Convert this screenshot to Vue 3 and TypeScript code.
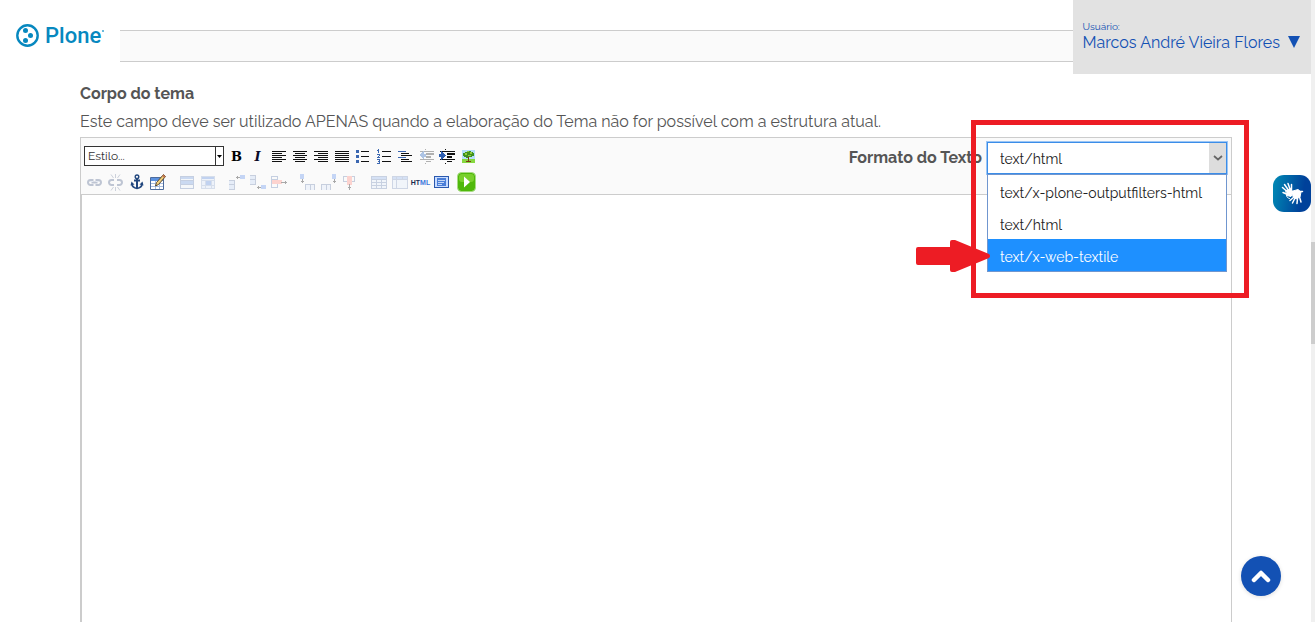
<script setup lang="ts">
import { ref } from 'vue'

interface Shape {
  d: string
  fill?: string
  stroke?: string
  width?: number
}
interface Tool {
  label: string
  shapes?: Shape[]
  text?: string
  kind?: string
  faded?: boolean
  smooth?: boolean
}

const box = (x: number, y: number, w: number, h: number): string => `M${x} ${y}h${w}v${h}h${-w}z`
const boxes = (list: number[][]): string => list.map(([x, y, w, h]) => box(x, y, w, h)).join('')

const INK = '#111111'
const BLUE = '#3a66b0'
const PALE = '#c3d6f5'

const lines = (x: number, short: number): string =>
  boxes([0, 1, 2, 3, 4, 5].map((i) => (i % 2 ? [x, 5 + i * 2, short, 1] : [4, 5 + i * 2, 14, 1])))

const grid = (x: number, y: number, w: number, h: number): Shape[] => [
  { d: box(x, y, w, h), fill: '#e6effc' },
  { d: box(x, y, w, 3), fill: '#9fbdf0' },
  {
    d: boxes([[x, y, w, 1], [x, y + h - 1, w, 1], [x, y, 1, h], [x + w - 1, y, 1, h], [x, y + 3, w, 1], [x, y + 6, w, 1], [x, y + 9, w, 1], [x + 5, y + 3, 1, h - 3], [x + 10, y + 3, 1, h - 3]]),
    fill: '#7f96bd',
  },
]

const cellPair = (x: number, y: number): Shape[] => [
  { d: box(x, y, 5, 9), fill: '#c9daf7' },
  { d: boxes([[x, y, 5, 1], [x, y + 4, 5, 1], [x, y + 9, 5, 1], [x + 5, y, 1, 10]]), fill: '#7d90b5' },
]

const rowOne: Tool[] = [
  { label: 'Negrito', text: 'B', kind: 'bold' },
  { label: 'Itálico', text: 'I', kind: 'italic' },
  { label: 'Alinhar à esquerda', shapes: [{ d: lines(4, 10), fill: INK }] },
  { label: 'Centralizar', shapes: [{ d: lines(6, 10), fill: INK }] },
  { label: 'Alinhar à direita', shapes: [{ d: lines(8, 10), fill: INK }] },
  { label: 'Justificar', shapes: [{ d: lines(4, 14), fill: INK }] },
  {
    label: 'Lista com marcadores',
    shapes: [
      { d: boxes([[4, 4, 3, 3], [4, 9, 3, 3], [4, 14, 3, 3]]), fill: BLUE },
      { d: boxes([[9, 5, 8, 1], [9, 10, 8, 1], [9, 15, 8, 1]]), fill: INK },
    ],
  },
  {
    label: 'Lista numerada',
    shapes: [
      { d: boxes([[5, 3, 1, 4], [4, 4, 1, 1], [4, 8, 3, 1], [6, 9, 1, 1], [5, 10, 1, 1], [4, 11, 3, 1], [4, 13, 3, 1], [6, 13, 1, 4], [5, 15, 1, 1], [4, 17, 3, 1]]), fill: BLUE },
      { d: boxes([[9, 5, 9, 1], [9, 10, 9, 1], [9, 15, 9, 1]]), fill: INK },
    ],
  },
  {
    label: 'Lista de definições',
    shapes: [
      { d: boxes([[4, 5, 8, 1], [4, 11, 8, 1]]), fill: BLUE },
      { d: boxes([[7, 7, 8, 1], [7, 9, 11, 1], [7, 13, 8, 1], [7, 15, 11, 1]]), fill: INK },
    ],
  },
  {
    label: 'Diminuir recuo',
    faded: true,
    shapes: [
      { d: boxes([[5, 5, 14, 1], [11, 7, 8, 2], [11, 10, 5, 2], [5, 13, 14, 1], [11, 15, 5, 1], [10, 3, 1, 1], [10, 17, 1, 1]]), fill: '#444444' },
      { d: 'M4 9l5-4v3h2v3h-2v3z', fill: '#3f75c5' },
    ],
  },
  {
    label: 'Aumentar recuo',
    shapes: [
      { d: boxes([[4, 5, 15, 1], [11, 7, 8, 2], [11, 10, 5, 2], [4, 13, 15, 1], [11, 15, 5, 1], [9, 3, 1, 1], [9, 17, 1, 1]]), fill: INK },
      { d: 'M10 9l-5-4v3h-2v3h2v3z', fill: '#2f5fb0' },
    ],
  },
  {
    label: 'Inserir imagem',
    shapes: [
      { d: box(5, 4, 13, 13), fill: '#b5defa' },
      { d: box(5, 13, 13, 4), fill: '#86d840' },
      { d: 'M8 6h2v-1h4v1h2v1h1v3h-2v1h-3v1h-3v-1h-2v-1h-1v-3h2z', fill: '#3f9120' },
      { d: boxes([[8, 7, 2, 2], [13, 6, 2, 2], [11, 9, 3, 1], [10, 5, 2, 1]]), fill: '#93cb3a' },
      { d: 'M11 11h1v4h2v1h-5v-1h2z', fill: '#7b3c12' },
    ],
  },
]

const rowTwo: Tool[][] = [
  [
    {
      label: 'Inserir link',
      faded: true,
      smooth: true,
      shapes: [
        { d: 'M9.5 13h-3a2.5 2.5 0 0 1 0-5h3M11.5 8h3a2.5 2.5 0 0 1 0 5h-3M7.5 10.5h6', stroke: '#66789b', width: 2 },
        { d: 'M6 9.5h3M12 9.5h3', stroke: '#c8d4ea', width: 1 },
      ],
    },
    {
      label: 'Remover link',
      faded: true,
      smooth: true,
      shapes: [
        { d: 'M9 13H6.5a2.5 2.5 0 0 1 0-5H9M12 8h2.5a2.5 2.5 0 0 1 0 5H12', stroke: '#66789b', width: 2 },
        { d: 'M10.5 2v4M6 2.5l2.5 3.5M15 2.5l-2.5 3.5M10.5 19v-4M6 18.5l2.5-3.5M15 18.5l-2.5-3.5', stroke: '#8996ae', width: 1 },
      ],
    },
    {
      label: 'Âncora',
      smooth: true,
      shapes: [
        { d: 'M11 7v9M8 8.5h6', stroke: '#22477e', width: 2 },
        { d: 'M11 3a1.5 1.5 0 1 1 0 3.6a1.5 1.5 0 1 1 0-3.6', stroke: '#22477e', width: 1.4 },
        { d: 'M5.8 11.5c.3 3 2.2 4.6 5.2 4.8c3-.2 4.9-1.8 5.2-4.8', stroke: '#22477e', width: 1.8 },
        { d: 'M4.5 13.5l1-4 3 3zM17.5 13.5l-1-4-3 3z', fill: '#22477e' },
      ],
    },
    {
      label: 'Editar tabela',
      smooth: true,
      shapes: [
        { d: box(3.5, 5.5, 13, 12), fill: '#ffffff', stroke: '#4d6c9d', width: 1 },
        { d: box(4, 6, 12, 3), fill: '#5b91df' },
        { d: 'M4 11.5h12M4 14.5h12M8.5 9v8M12.5 9v8', stroke: '#a8bddd', width: 1 },
        { d: 'M16.5 2.5l2 2-7 8-3 1.5 1-3.5z', fill: '#f0cf7a', stroke: '#5d4a30', width: 1 },
        { d: 'M16.5 2.5l2 2-1.5 1.5-2-2z', fill: '#c57951' },
      ],
    },
  ],
  [
    {
      label: 'Propriedades da linha',
      faded: true,
      shapes: [
        { d: box(4, 4, 14, 12), fill: '#edf3fc' },
        { d: boxes([[4, 4, 14, 3], [5, 9, 12, 3]]), fill: '#84a9e6' },
        { d: boxes([[4, 4, 14, 1], [4, 8, 14, 1], [4, 12, 14, 1], [4, 16, 14, 1], [4, 4, 1, 12], [17, 4, 1, 12]]), fill: '#7891bc' },
      ],
    },
    {
      label: 'Propriedades da célula',
      faded: true,
      shapes: [
        { d: box(4, 4, 14, 12), fill: '#dbe7fa' },
        { d: boxes([[4, 4, 14, 3], [9, 9, 5, 4]]), fill: '#6d98e2' },
        { d: boxes([[4, 4, 14, 1], [4, 8, 14, 1], [4, 13, 14, 1], [4, 16, 14, 1], [4, 4, 1, 12], [8, 8, 1, 8], [14, 8, 1, 8], [17, 4, 1, 12]]), fill: '#a3b6d6' },
      ],
    },
  ],
  [
    {
      label: 'Inserir linha antes',
      faded: true,
      shapes: [
        ...cellPair(3, 8),
        { d: box(14, 3, 5, 4), fill: '#74a0ee' },
        { d: boxes([[10, 5, 4, 1], [11, 4, 1, 3]]), fill: '#333333' },
      ],
    },
    {
      label: 'Inserir linha depois',
      faded: true,
      shapes: [
        ...cellPair(3, 3),
        { d: box(14, 13, 5, 4), fill: '#74a0ee' },
        { d: boxes([[10, 15, 4, 1], [11, 14, 1, 3]]), fill: '#333333' },
      ],
    },
    {
      label: 'Excluir linha',
      faded: true,
      shapes: [
        { d: boxes([[3, 4, 7, 1], [3, 7, 7, 1], [3, 4, 1, 12], [9, 4, 1, 12], [3, 15, 7, 1]]), fill: '#7891bc' },
        { d: box(4, 8, 10, 4), fill: '#ff9a90' },
        { d: boxes([[13, 10, 6, 1], [17, 9, 1, 3]]), fill: '#333333' },
      ],
    },
  ],
  [
    {
      label: 'Inserir coluna antes',
      faded: true,
      shapes: [
        { d: box(3, 2, 4, 5), fill: '#74a0ee' },
        { d: boxes([[5, 7, 1, 4], [4, 9, 3, 1]]), fill: '#333333' },
        { d: box(8, 12, 9, 6), fill: '#dfe9fa' },
        { d: boxes([[8, 12, 10, 1], [8, 12, 1, 6], [13, 12, 1, 6], [17, 12, 1, 6]]), fill: '#7d90b5' },
      ],
    },
    {
      label: 'Inserir coluna depois',
      faded: true,
      shapes: [
        { d: box(14, 2, 4, 5), fill: '#74a0ee' },
        { d: boxes([[16, 7, 1, 4], [15, 9, 3, 1]]), fill: '#333333' },
        { d: box(3, 12, 9, 6), fill: '#dfe9fa' },
        { d: boxes([[3, 12, 10, 1], [3, 12, 1, 6], [8, 12, 1, 6], [12, 12, 1, 6]]), fill: '#7d90b5' },
      ],
    },
    {
      label: 'Excluir coluna',
      faded: true,
      shapes: [
        { d: boxes([[4, 4, 12, 1], [4, 4, 1, 6], [15, 4, 1, 6], [4, 9, 12, 1]]), fill: '#7d90b5' },
        { d: box(8, 4, 5, 9), fill: '#ff9a90' },
        { d: boxes([[10, 12, 1, 6], [9, 15, 3, 1]]), fill: '#333333' },
      ],
    },
  ],
  [
    { label: 'Mesclar células', faded: true, shapes: grid(3, 4, 16, 13) },
    {
      label: 'Dividir células',
      faded: true,
      shapes: [
        { d: box(3, 4, 16, 13), fill: '#e6effc' },
        { d: box(3, 4, 16, 3), fill: '#9fbdf0' },
        { d: boxes([[3, 4, 16, 1], [3, 16, 16, 1], [3, 4, 1, 13], [18, 4, 1, 13], [3, 7, 16, 1], [7, 4, 1, 12], [13, 4, 1, 3]]), fill: '#8da3c8' },
      ],
    },
    { label: 'Editar HTML', text: 'HTML', kind: 'html' },
    {
      label: 'Tela cheia',
      shapes: [
        { d: box(3, 4, 15, 12), fill: '#2b59ae' },
        { d: box(4, 5, 13, 10), fill: '#c8dcff' },
        { d: box(6, 6, 9, 8), fill: '#4a7ed8' },
        { d: boxes([[7, 8, 7, 1], [7, 10, 6, 1], [7, 12, 4, 1]]), fill: PALE },
      ],
    },
  ],
]

const formats: string[] = ['text/x-plone-outputfilters-html', 'text/html', 'text/x-web-textile']
const format = ref('text/html')
const highlighted = ref('text/x-web-textile')
const content = ref('')
</script>

<template>
  <div class="page">
    <header class="top">
      <a class="logo" href="#" aria-label="Plone">
        <svg width="24" height="24" viewBox="0 0 24 24" aria-hidden="true">
          <circle cx="11.5" cy="11.5" r="10.2" fill="none" stroke="#0788bf" stroke-width="2.4" />
          <g fill="#0788bf">
            <circle cx="9.5" cy="6.5" r="2.5" />
            <circle cx="14.5" cy="11.5" r="2.5" />
            <circle cx="9.5" cy="16.5" r="2.5" />
          </g>
        </svg>
        <span>Plone</span><i class="mark"></i>
      </a>
      <div class="strip"></div>
      <button class="user" type="button">
        <small>Usuário:</small>
        <span class="name">Marcos André Vieira Flores
          <svg width="12" height="12" viewBox="0 0 12 12" aria-hidden="true"><path d="M0 0h12L6 12z" fill="#1351b4" /></svg>
        </span>
      </button>
    </header>

    <main class="field">
      <label class="title" for="body-text">Corpo do tema</label>
      <p class="help">Este campo deve ser utilizado APENAS quando a elaboração do Tema não for possível com a estrutura atual.</p>

      <div class="editor">
        <div class="toolbar">
          <div class="tools">
            <div class="row">
              <span class="style-box">
                <select aria-label="Estilo"><option>Estilo...</option></select>
                <svg width="5" height="3" viewBox="0 0 5 3" aria-hidden="true"><path d="M0 0h5L2.5 3z" /></svg>
              </span>
              <button v-for="tool in rowOne" :key="tool.label" type="button" class="tool" :class="[tool.kind, { faded: tool.faded }]" :aria-label="tool.label">
                <template v-if="tool.text">{{ tool.text }}</template>
                <svg v-else width="21" height="20" viewBox="0 0 21 20" aria-hidden="true" class="crisp">
                  <path v-for="(s, i) in tool.shapes" :key="i" :d="s.d" :fill="s.fill ?? 'none'" />
                </svg>
              </button>
            </div>
            <div class="row groups">
              <div v-for="(group, g) in rowTwo" :key="g" class="group">
                <button v-for="tool in group" :key="tool.label" type="button" class="tool" :class="[tool.kind, { faded: tool.faded }]" :aria-label="tool.label">
                  <template v-if="tool.text">HT<b>ML</b></template>
                  <svg v-else width="21" height="20" viewBox="0 0 21 20" aria-hidden="true" :class="{ crisp: !tool.smooth }">
                    <path v-for="(s, i) in tool.shapes" :key="i" :d="s.d" :fill="s.fill ?? 'none'" :stroke="s.stroke" :stroke-width="s.width" />
                  </svg>
                </button>
                <button v-if="g === rowTwo.length - 1" type="button" class="tool run" aria-label="Inserir mídia">
                  <svg width="20" height="20" viewBox="0 0 20 20" aria-hidden="true">
                    <rect x="0.5" y="0.5" width="18" height="19" rx="4" fill="#4fb80a" stroke="#a8dc85" />
                    <rect x="2" y="2" width="15" height="8" rx="3" fill="#79d02d" />
                    <path d="M7 4.5l6 5.5L7 15.5z" fill="#ffffff" />
                  </svg>
                </button>
              </div>
            </div>
          </div>

          <div class="format">
            <label for="format">Formato do Texto</label>
            <div class="combo">
              <select id="format" v-model="format">
                <option v-for="f in formats" :key="f" :value="f">{{ f }}</option>
              </select>
              <span class="chevron">
                <svg width="10" height="6" viewBox="0 0 10 6" aria-hidden="true"><path d="M1 1l4 3.5L9 1" fill="none" stroke="#666666" stroke-width="1.7" /></svg>
              </span>
              <ul class="menu" role="listbox" aria-label="Formato do Texto">
                <li v-for="f in formats" :key="f" role="option" :aria-selected="f === highlighted" :class="{ active: f === highlighted }" @mouseenter="highlighted = f" @click="format = f">{{ f }}</li>
              </ul>
            </div>
          </div>
        </div>
        <textarea id="body-text" v-model="content"></textarea>
        <div class="callout">
          <svg class="arrow" width="75" height="32" viewBox="0 0 75 32" aria-hidden="true">
            <path d="M2 7H34V2Q34 0 36 0H39L73 14Q75 16 73 18L39 32H36Q34 32 34 30V25H2Q0 25 0 23V9Q0 7 2 7z" fill="#ed1c24" />
          </svg>
        </div>
      </div>
    </main>

    <button class="libras" type="button" aria-label="Acessível em Libras">
      <svg width="38" height="37" viewBox="0 0 38 37" aria-hidden="true" fill="none" stroke="#ffffff" stroke-linecap="round" stroke-linejoin="round">
        <path d="M13.5 16L9.5 12.5M15 14.5L11.5 9.5M17 14L15 8.5M18.5 14.5L18.5 9.5M13.5 19L10 17.5" stroke-width="1.5" />
        <path d="M13 15.5l5-2 2 4-2 4-4-1z" fill="#ffffff" />
        <path d="M20 16l5-1.5 3 2.5-1 5-4 2-3.5-3z" fill="#ffffff" />
        <path d="M26 16.5l3.5 0M21 22l-4 3.5M22 23l-2.5 5M24.5 23.5l-.5 5M26.5 22l1.5 5" stroke-width="1.5" />
        <path d="M13.5 20c0 2 1 3 3 3.5" stroke-width="1" />
      </svg>
    </button>

    <button class="to-top" type="button" aria-label="Voltar ao topo">
      <svg width="20" height="14" viewBox="0 0 20 14" aria-hidden="true">
        <path d="M3 11l7-7 7 7" fill="none" stroke="#ffffff" stroke-width="4.5" stroke-linecap="round" stroke-linejoin="round" />
      </svg>
    </button>

    <div class="scrollbar" aria-hidden="true"><span></span></div>
  </div>
</template>

<style>
body {
  margin: 0;
  background: #ffffff;
}
</style>

<style scoped>
* {
  box-sizing: border-box;
}
.page {
  position: relative;
  display: flex;
  flex-direction: column;
  height: 100vh;
  overflow: hidden;
  padding-right: 4px;
  color: #555555;
  font: 16px/28px Raleway, Lato, sans-serif;
}
button {
  margin: 0;
  padding: 0;
  border: 0;
  background: none;
  font: inherit;
  cursor: pointer;
}
.top {
  display: flex;
  align-items: flex-start;
  height: 74px;
  flex: none;
}
.logo {
  display: flex;
  align-items: center;
  gap: 5px;
  width: 120px;
  height: 72px;
  padding-left: 16px;
  color: #0788bf;
  font: 500 22px/28px Roboto, sans-serif;
  text-decoration: none;
}
.mark {
  width: 2px;
  height: 2px;
  margin: 0 0 10px -4px;
  background: #6dbbdc;
}
.strip {
  flex: 1;
  height: 32px;
  margin-top: 30px;
  border: 1px solid #cccccc;
  border-width: 1px 0;
  background: #fafafa;
}
.user {
  display: flex;
  flex-direction: column;
  align-items: flex-start;
  height: 74px;
  padding: 21px 10px 0;
  background: #e2e2e2;
  color: #1351b4;
  text-align: left;
}
.user small {
  font-size: 10px;
  line-height: 12px;
}
.name {
  line-height: 20px;
  white-space: nowrap;
}
.name svg {
  margin: 0 1px 0 4px;
}
.field {
  display: flex;
  flex: 1;
  flex-direction: column;
  margin: 0 79px 0 80px;
  padding-top: 6px;
}
.title {
  font-weight: 700;
}
.help {
  margin: 0 0 1px;
}
.editor {
  position: relative;
  display: flex;
  flex: 1;
  flex-direction: column;
  border: 1px solid #cccccc;
  border-bottom: 0;
}
.toolbar {
  display: flex;
  align-items: flex-start;
  justify-content: space-between;
  padding: 4px 4px 2px 3px;
  border-bottom: 1px solid #cccccc;
  background: #fafafa;
}
.tools {
  display: flex;
  flex-direction: column;
  gap: 6px;
  padding-top: 4px;
}
.row {
  display: flex;
  height: 20px;
}
.groups {
  gap: 8px;
}
.group {
  display: flex;
}
.tool {
  width: 21px;
  height: 20px;
  color: #000000;
  line-height: 20px;
  text-align: center;
}
.tool svg {
  display: block;
}
.crisp {
  shape-rendering: crispEdges;
}
.faded {
  opacity: 0.4;
}
.bold {
  font: 700 13px/22px "DejaVu Serif", serif;
}
.italic {
  color: #0a0a28;
  font: italic 700 13px/22px "DejaVu Serif", serif;
}
.html {
  color: #1a2b50;
  font: 700 7px/22px "Liberation Sans", sans-serif;
}
.html b {
  color: #3c78dc;
}
.run {
  margin-left: 5px;
}
.style-box {
  position: relative;
  width: 140px;
  height: 20px;
  margin-right: 2px;
  border: 1px solid #333333;
  background: #ffffff;
}
.style-box select {
  display: block;
  width: 100%;
  height: 18px;
  padding: 0 12px 0 3px;
  border: 0;
  appearance: none;
  background: transparent;
  color: #333333;
  font: 12px/18px Raleway, Lato, sans-serif;
}
.style-box::after {
  position: absolute;
  top: 0;
  right: 7px;
  width: 1px;
  height: 18px;
  background: #333333;
  content: "";
}
.style-box svg {
  position: absolute;
  top: 8px;
  right: 1px;
}
.format {
  display: flex;
  gap: 5px;
  height: 50px;
}
.format label {
  font-weight: 700;
  line-height: 32px;
}
.combo {
  position: relative;
  width: 240px;
}
.combo select {
  display: block;
  width: 100%;
  height: 32px;
  padding: 2px 30px 0 12px;
  border: 1px solid #3b8de8;
  outline: 1px solid #9cc6f5;
  appearance: none;
  background: #ffffff;
  color: #222222;
  font: 14px/28px Raleway, Lato, sans-serif;
}
.chevron {
  position: absolute;
  top: 1px;
  right: 1px;
  display: flex;
  align-items: center;
  justify-content: center;
  width: 17px;
  height: 30px;
  background: #dddddd;
  pointer-events: none;
}
.menu {
  position: absolute;
  z-index: 2;
  top: 32px;
  left: 0;
  right: 0;
  margin: 0;
  padding: 0;
  border: 1px solid #7096cf;
  background: #ffffff;
  color: #222222;
  font-size: 14px;
  line-height: 32px;
  list-style: none;
}
.menu li {
  padding: 2px 0 0 12px;
  height: 32px;
}
.menu .active {
  background: #1e90ff;
  color: #ffffff;
}
textarea {
  flex: 1;
  padding: 8px;
  border: 0;
  border-left: 1px solid #cccccc;
  outline: 0;
  resize: none;
  font: inherit;
}
.callout {
  position: absolute;
  z-index: 3;
  top: -18px;
  right: -18px;
  width: 278px;
  height: 178px;
  border: 5px solid #ed1c24;
  pointer-events: none;
}
.arrow {
  position: absolute;
  top: 115px;
  left: -60px;
}
.libras {
  position: absolute;
  top: 175px;
  right: 4px;
  width: 38px;
  height: 37px;
  border-radius: 11px;
  background: linear-gradient(100deg, #008bb5, #00419a 75%);
}
.libras svg {
  display: block;
}
.to-top {
  position: absolute;
  right: 34px;
  bottom: 26px;
  display: flex;
  align-items: center;
  justify-content: center;
  width: 40px;
  height: 40px;
  border-radius: 50%;
  background: #1351b4;
  box-shadow: 0 1px 4px #00000022;
}
.scrollbar {
  position: absolute;
  top: 0;
  right: 0;
  bottom: 0;
  width: 4px;
  background: #f0f0f0;
}
.scrollbar span {
  display: block;
  height: 102px;
  margin-top: 242px;
  background: #cdcdcd;
}
</style>
